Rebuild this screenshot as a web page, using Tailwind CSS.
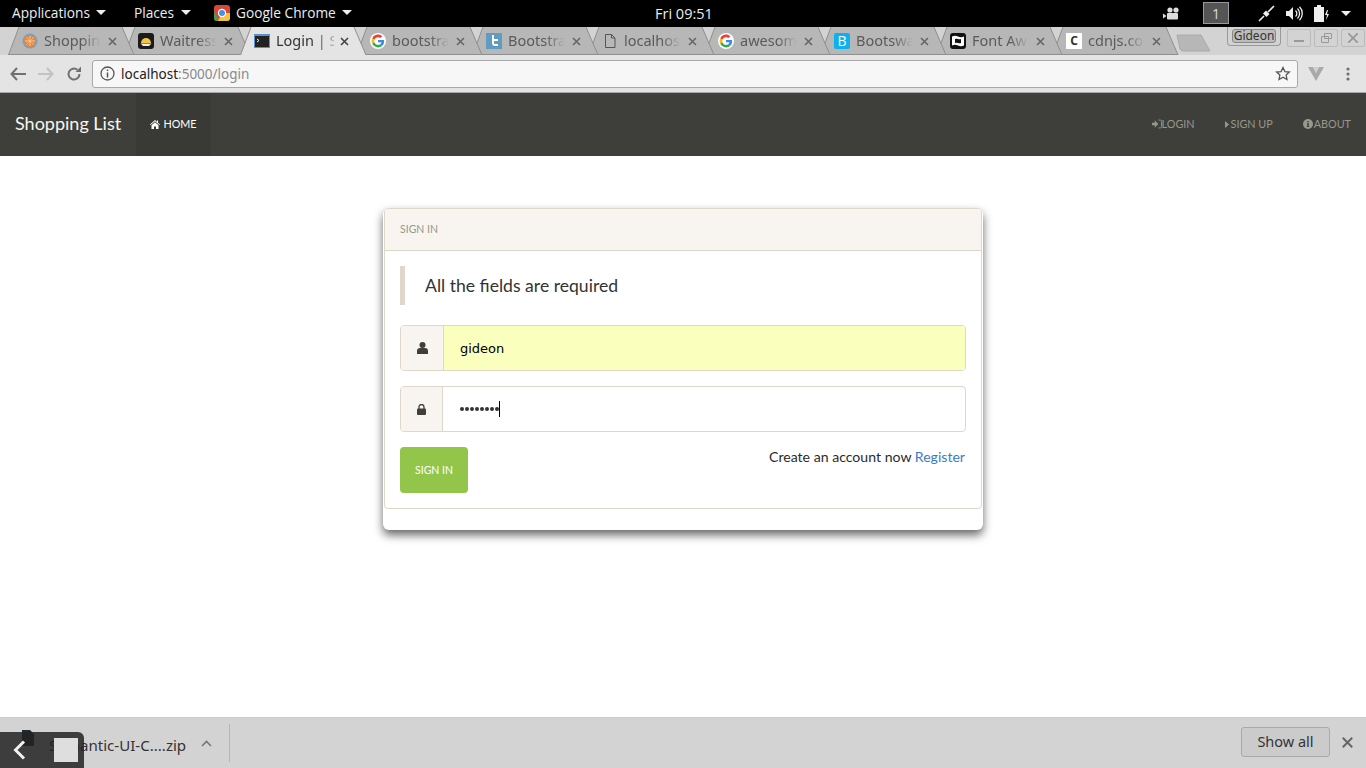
<!DOCTYPE html>
<html lang="en">
<head>
<meta charset="utf-8">
<title>Login | Shopping List</title>
<script src="https://cdn.jsdelivr.net/npm/@tailwindcss/browser@4"></script>
</head>
<body class="bg-white overflow-hidden font-['Lato',sans-serif]">
<div class="relative flex flex-col w-[1366px] h-[768px] overflow-hidden">

  <!-- GNOME top bar -->
  <header class="relative flex items-center h-[27px] shrink-0 pb-[1px] bg-black text-[#eeeeee] text-[13.7px] font-['Open_Sans',sans-serif]">
    <div class="flex items-center gap-[6px] ml-[12px] w-[122px]">
      <span>Applications</span>
      <svg width="10" height="5" viewBox="0 0 10 5"><path d="M0 0h10L5 5z" fill="#eee"/></svg>
    </div>
    <div class="flex items-center gap-[7px] w-[80px]">
      <span>Places</span>
      <svg width="10" height="5" viewBox="0 0 10 5"><path d="M0 0h10L5 5z" fill="#eee"/></svg>
    </div>
    <div class="flex items-center gap-[6px]">
      <svg width="16" height="16" viewBox="0 0 16 16" class="rounded-[3px]">
        <rect width="16" height="16" fill="#d8473a"/><path d="M0 16V6l5 10z" fill="#43a047"/><path d="M16 16H4l4-8h8z" fill="#f5c33b"/><circle cx="8" cy="8" r="4.2" fill="#fff"/><circle cx="8" cy="8" r="3" fill="#4a8fe0"/>
      </svg>
      <span>Google Chrome</span>
      <svg width="10" height="5" viewBox="0 0 10 5"><path d="M0 0h10L5 5z" fill="#eee"/></svg>
    </div>
    <span class="absolute left-[655px] top-[3px] text-[14.5px]">Fri 09:51</span>
    <div class="ml-auto flex items-center">
      <svg width="16" height="13" viewBox="0 0 16 13" class="mr-[24px]"><circle cx="7" cy="3" r="2.6" fill="#ddd"/><circle cx="13" cy="3" r="2.6" fill="#ddd"/><rect x="4" y="6" width="11" height="6.5" rx="1" fill="#ddd"/><path d="M0 6.5l3.5 2.5L0 11.5z" fill="#ddd"/></svg>
      <div class="flex items-center justify-center w-[26px] h-[22px] bg-[#555555] border border-[#9a9a9a] text-[14px] text-[#dddddd] mr-[29px]">1</div>
      <svg width="17" height="17" viewBox="0 0 17 17" class="mr-[11px]"><path d="M1 16l5-5M7 7l3 3M10 7l6-6" stroke="#eee" stroke-width="1.6" fill="none"/><path d="M5 8.5l3-3 3.5 3.5-3 3z" fill="#eee"/></svg>
      <svg width="17" height="15" viewBox="0 0 17 15" class="mr-[11px]"><path d="M0 5h3l4-4v13l-4-4H0z" fill="#eee"/><path d="M9.500 4.500a4 4 0 0 1 0 6M11.500 2.500a7 7 0 0 1 0 10M13.500 .8a9.500 9.500 0 0 1 0 13.400" stroke="#eee" stroke-width="1.300" fill="none"/></svg>
      <svg width="16" height="17" viewBox="0 0 16 17" class="mr-[11px]"><path d="M3 0h4v2h3v15H0V2h3z" fill="#eee"/><path d="M13 5l-2 5h2l-1 5 3-6h-2l1-4z" fill="#eee"/></svg>
      <svg width="10" height="5" viewBox="0 0 10 5" class="mr-[15px]"><path d="M0 0h10L5 5z" fill="#eee"/></svg>
    </div>
  </header>

  <!-- Chrome tab strip -->
  <div class="relative flex h-[28px] shrink-0 bg-[#d3d3d3] pl-[8px]">

    <div class="relative z-[19] w-[116px] h-full shrink-0 flex items-center text-[14.5px] text-[#5a5a5a] font-['Noto_Sans',sans-serif]">
      <svg class="absolute left-0 top-0" width="128" height="28" viewBox="0 0 128 28"><path d="M.5 28 11 0h103l12 28z" fill="#b7b7b7"/><path d="M.5 28 11 0M114 0l12 28M0 27.500h126" stroke="#8f8f8f" fill="none"/></svg>
      <svg class="relative ml-[14px]" width="16" height="16" viewBox="0 0 16 16"><circle cx="8" cy="8" r="7.500" fill="#7b9fc4"/><circle cx="8" cy="8" r="6" fill="#e8873a"/><circle cx="8" cy="8" r="1.600" fill="#f6c9a0"/><path d="M8 3v3M8 10v3M3 8h3M10 8h3M4.500 4.500l2 2M9.500 9.500l2 2M11.500 4.500l-2 2M6.500 9.500l-2 2" stroke="#f6c9a0"/></svg>
      <span class="relative ml-[6px] w-[58px] whitespace-nowrap [mask-image:linear-gradient(to_right,black_65%,transparent_98%)]">Shoppin</span>
      <svg class="relative ml-[6px]" width="9" height="9" viewBox="0 0 9 9"><path d="M1 1l7 7M8 1l-7 7" stroke="#666" stroke-width="1.600"/></svg>
    </div>

    <div class="relative z-[18] w-[116px] h-full shrink-0 flex items-center text-[14.5px] text-[#5a5a5a] font-['Noto_Sans',sans-serif]">
      <svg class="absolute left-0 top-0" width="128" height="28" viewBox="0 0 128 28"><path d="M.5 28 11 0h103l12 28z" fill="#b7b7b7"/><path d="M.5 28 11 0M114 0l12 28M0 27.500h126" stroke="#8f8f8f" fill="none"/></svg>
      <svg class="relative ml-[14px]" width="16" height="16" viewBox="0 0 16 16"><rect width="16" height="16" rx="3" fill="#1b1b1b"/><path d="M3 10a5 5 0 0 1 10 0z" fill="#f4c542"/><path d="M2.500 10.500h11L11 13H5z" fill="#eee"/></svg>
      <span class="relative ml-[6px] w-[58px] whitespace-nowrap [mask-image:linear-gradient(to_right,black_65%,transparent_98%)]">Waitress</span>
      <svg class="relative ml-[6px]" width="9" height="9" viewBox="0 0 9 9"><path d="M1 1l7 7M8 1l-7 7" stroke="#666" stroke-width="1.600"/></svg>
    </div>

    <div class="relative z-[25] w-[116px] h-full shrink-0 flex items-center text-[14.5px] text-[#333333] font-['Noto_Sans',sans-serif]">
      <svg class="absolute left-0 top-0" width="128" height="28" viewBox="0 0 128 28"><path d="M.5 28 11 0h103l12 28z" fill="#e4e4e4"/><path d="M.5 28 11 0M114 0l12 28" stroke="#8f8f8f" fill="none"/></svg>
      <svg class="relative ml-[14px]" width="16" height="16" viewBox="0 0 16 16"><rect width="16" height="14" y="1" fill="#5b8fc9"/><rect x="1" y="3" width="14" height="11" fill="#222"/><path d="M3 6l2 1.500L3 9" stroke="#eee" fill="none"/></svg>
      <span class="relative ml-[6px] w-[58px] whitespace-nowrap [mask-image:linear-gradient(to_right,black_65%,rgba(0,0,0,0.25)_100%)]">Login | S</span>
      <svg class="relative ml-[6px]" width="9" height="9" viewBox="0 0 9 9"><path d="M1 1l7 7M8 1l-7 7" stroke="#444" stroke-width="1.600"/></svg>
    </div>

    <div class="relative z-[16] w-[116px] h-full shrink-0 flex items-center text-[14.5px] text-[#5a5a5a] font-['Noto_Sans',sans-serif]">
      <svg class="absolute left-0 top-0" width="128" height="28" viewBox="0 0 128 28"><path d="M.5 28 11 0h103l12 28z" fill="#b7b7b7"/><path d="M.5 28 11 0M114 0l12 28M0 27.500h126" stroke="#8f8f8f" fill="none"/></svg>
      <svg class="relative ml-[14px]" width="16" height="16" viewBox="-6 -6 60 60"><circle cx="24" cy="24" r="30" fill="#fff"/><path fill="#EA4335" d="M24 9.500c3.540 0 6.710 1.220 9.210 3.600l6.850-6.850C35.900 2.380 30.470 0 24 0 14.620 0 6.510 5.380 2.560 13.220l7.980 6.190C12.430 13.720 17.740 9.500 24 9.500z"/><path fill="#4285F4" d="M46.980 24.550c0-1.570-.15-3.090-.38-4.550H24v9.020h12.940c-.58 2.960-2.260 5.480-4.780 7.180l7.730 6c4.510-4.180 7.090-10.360 7.090-17.650z"/><path fill="#FBBC05" d="M10.530 28.590c-.48-1.450-.76-2.990-.76-4.590s.27-3.140.76-4.590l-7.980-6.190C.92 16.460 0 20.120 0 24c0 3.880.92 7.540 2.560 10.780l7.970-6.190z"/><path fill="#34A853" d="M24 48c6.480 0 11.930-2.130 16.090-5.810l-7.730-6c-2.150 1.450-4.920 2.300-8.360 2.300-6.260 0-11.570-4.220-13.470-9.910l-7.980 6.190C6.510 42.620 14.620 48 24 48z"/></svg>
      <span class="relative ml-[6px] w-[58px] whitespace-nowrap [mask-image:linear-gradient(to_right,black_65%,transparent_98%)]">bootstra</span>
      <svg class="relative ml-[6px]" width="9" height="9" viewBox="0 0 9 9"><path d="M1 1l7 7M8 1l-7 7" stroke="#666" stroke-width="1.600"/></svg>
    </div>

    <div class="relative z-[15] w-[116px] h-full shrink-0 flex items-center text-[14.5px] text-[#5a5a5a] font-['Noto_Sans',sans-serif]">
      <svg class="absolute left-0 top-0" width="128" height="28" viewBox="0 0 128 28"><path d="M.5 28 11 0h103l12 28z" fill="#b7b7b7"/><path d="M.5 28 11 0M114 0l12 28M0 27.500h126" stroke="#8f8f8f" fill="none"/></svg>
      <svg class="relative ml-[14px]" width="16" height="16" viewBox="0 0 16 16"><rect width="16" height="16" fill="#5f9cc0"/><path d="M6 2v8c0 2 1.500 3 3 3h3v-2H9c-.6 0-1-.4-1-1V8h4V6H8V2z" fill="#fff"/></svg>
      <span class="relative ml-[6px] w-[58px] whitespace-nowrap [mask-image:linear-gradient(to_right,black_65%,transparent_98%)]">Bootstra</span>
      <svg class="relative ml-[6px]" width="9" height="9" viewBox="0 0 9 9"><path d="M1 1l7 7M8 1l-7 7" stroke="#666" stroke-width="1.600"/></svg>
    </div>

    <div class="relative z-[14] w-[116px] h-full shrink-0 flex items-center text-[14.5px] text-[#5a5a5a] font-['Noto_Sans',sans-serif]">
      <svg class="absolute left-0 top-0" width="128" height="28" viewBox="0 0 128 28"><path d="M.5 28 11 0h103l12 28z" fill="#b7b7b7"/><path d="M.5 28 11 0M114 0l12 28M0 27.500h126" stroke="#8f8f8f" fill="none"/></svg>
      <svg class="relative ml-[14px]" width="16" height="16" viewBox="0 0 16 16"><path d="M3.500 1.500h6l3.500 3.500v9.500h-9.500zM9.500 1.500V5H13" stroke="#555" fill="none"/></svg>
      <span class="relative ml-[6px] w-[58px] whitespace-nowrap [mask-image:linear-gradient(to_right,black_65%,transparent_98%)]">localhos</span>
      <svg class="relative ml-[6px]" width="9" height="9" viewBox="0 0 9 9"><path d="M1 1l7 7M8 1l-7 7" stroke="#666" stroke-width="1.600"/></svg>
    </div>

    <div class="relative z-[13] w-[116px] h-full shrink-0 flex items-center text-[14.5px] text-[#5a5a5a] font-['Noto_Sans',sans-serif]">
      <svg class="absolute left-0 top-0" width="128" height="28" viewBox="0 0 128 28"><path d="M.5 28 11 0h103l12 28z" fill="#b7b7b7"/><path d="M.5 28 11 0M114 0l12 28M0 27.500h126" stroke="#8f8f8f" fill="none"/></svg>
      <svg class="relative ml-[14px]" width="16" height="16" viewBox="-6 -6 60 60"><circle cx="24" cy="24" r="30" fill="#fff"/><path fill="#EA4335" d="M24 9.500c3.540 0 6.710 1.220 9.210 3.600l6.850-6.850C35.900 2.380 30.470 0 24 0 14.620 0 6.510 5.380 2.560 13.220l7.980 6.190C12.430 13.720 17.740 9.500 24 9.500z"/><path fill="#4285F4" d="M46.980 24.550c0-1.570-.15-3.090-.38-4.550H24v9.020h12.940c-.58 2.960-2.260 5.480-4.780 7.180l7.730 6c4.510-4.180 7.090-10.360 7.090-17.650z"/><path fill="#FBBC05" d="M10.530 28.590c-.48-1.450-.76-2.990-.76-4.590s.27-3.140.76-4.590l-7.980-6.190C.92 16.460 0 20.120 0 24c0 3.880.92 7.540 2.560 10.780l7.970-6.190z"/><path fill="#34A853" d="M24 48c6.480 0 11.930-2.130 16.090-5.810l-7.730-6c-2.150 1.450-4.920 2.300-8.360 2.300-6.260 0-11.570-4.220-13.470-9.910l-7.980 6.190C6.510 42.620 14.620 48 24 48z"/></svg>
      <span class="relative ml-[6px] w-[58px] whitespace-nowrap [mask-image:linear-gradient(to_right,black_65%,transparent_98%)]">awesom</span>
      <svg class="relative ml-[6px]" width="9" height="9" viewBox="0 0 9 9"><path d="M1 1l7 7M8 1l-7 7" stroke="#666" stroke-width="1.600"/></svg>
    </div>

    <div class="relative z-[12] w-[116px] h-full shrink-0 flex items-center text-[14.5px] text-[#5a5a5a] font-['Noto_Sans',sans-serif]">
      <svg class="absolute left-0 top-0" width="128" height="28" viewBox="0 0 128 28"><path d="M.5 28 11 0h103l12 28z" fill="#b7b7b7"/><path d="M.5 28 11 0M114 0l12 28M0 27.500h126" stroke="#8f8f8f" fill="none"/></svg>
      <div class="relative ml-[14px] flex items-center justify-center w-[16px] h-[16px] rounded-[2px] bg-[#0fb0ee] text-white text-[14px] font-['Open_Sans',sans-serif] leading-none">B</div>
      <span class="relative ml-[6px] w-[58px] whitespace-nowrap [mask-image:linear-gradient(to_right,black_65%,transparent_98%)]">Bootswa</span>
      <svg class="relative ml-[6px]" width="9" height="9" viewBox="0 0 9 9"><path d="M1 1l7 7M8 1l-7 7" stroke="#666" stroke-width="1.600"/></svg>
    </div>

    <div class="relative z-[11] w-[116px] h-full shrink-0 flex items-center text-[14.5px] text-[#5a5a5a] font-['Noto_Sans',sans-serif]">
      <svg class="absolute left-0 top-0" width="128" height="28" viewBox="0 0 128 28"><path d="M.5 28 11 0h103l12 28z" fill="#b7b7b7"/><path d="M.5 28 11 0M114 0l12 28M0 27.500h126" stroke="#8f8f8f" fill="none"/></svg>
      <svg class="relative ml-[14px]" width="16" height="16" viewBox="0 0 16 16"><rect width="16" height="16" rx="3" fill="#111"/><path d="M2 3.500q3-1.500 6 0t6 0v9q-3 1.500-6 0t-6 0z" fill="#fff"/><path d="M5 6q1.500-.6 3 0t3 0v4q-1.500.6-3 0t-3 0z" fill="#111"/></svg>
      <span class="relative ml-[6px] w-[58px] whitespace-nowrap [mask-image:linear-gradient(to_right,black_65%,transparent_98%)]">Font Aw</span>
      <svg class="relative ml-[6px]" width="9" height="9" viewBox="0 0 9 9"><path d="M1 1l7 7M8 1l-7 7" stroke="#666" stroke-width="1.600"/></svg>
    </div>

    <div class="relative z-[10] w-[116px] h-full shrink-0 flex items-center text-[14.5px] text-[#5a5a5a] font-['Noto_Sans',sans-serif]">
      <svg class="absolute left-0 top-0" width="128" height="28" viewBox="0 0 128 28"><path d="M.5 28 11 0h103l12 28z" fill="#b7b7b7"/><path d="M.5 28 11 0M114 0l12 28M0 27.500h126" stroke="#8f8f8f" fill="none"/></svg>
      <div class="relative ml-[14px] flex items-center justify-center w-[16px] h-[16px] bg-white text-[#333333] text-[12px] font-bold leading-none">C</div>
      <span class="relative ml-[6px] w-[58px] whitespace-nowrap [mask-image:linear-gradient(to_right,black_65%,transparent_98%)]">cdnjs.co</span>
      <svg class="relative ml-[6px]" width="9" height="9" viewBox="0 0 9 9"><path d="M1 1l7 7M8 1l-7 7" stroke="#666" stroke-width="1.600"/></svg>
    </div>

    <svg class="relative z-[5] ml-[8px] mt-[7px]" width="36" height="18" viewBox="0 0 36 18"><path d="M1 1h24l9 16H7q-2 0-3-2z" fill="#b7b7b7" stroke="#aaa"/></svg>

    <div class="ml-auto flex items-start gap-[3px] pr-[1px]">
      <div class="flex items-center justify-center w-[54px] h-[19px] rounded-b-[4px] border border-t-0 border-[#999999] text-[12px] text-[#333333] font-['Noto_Sans',sans-serif] leading-none mr-[3px]"><span class="px-[1px] rounded-[3px] bg-[#bcbcbc] border border-[#888888]">Gideon</span></div>
      <div class="flex items-center justify-center w-[24px] h-[18px] mt-[2px] border border-[#bbbbbb] rounded-[2px]"><svg width="10" height="10" viewBox="0 0 10 10"><path d="M0 8h10" stroke="#999" stroke-width="2"/></svg></div>
      <div class="flex items-center justify-center w-[24px] h-[18px] mt-[2px] border border-[#bbbbbb] rounded-[2px]"><svg width="11" height="10" viewBox="0 0 11 10"><path d="M3.500 .5h7v5h-7zM.5 3.500h7v6h-7z" stroke="#999" fill="#d3d3d3"/></svg></div>
      <div class="flex items-center justify-center w-[24px] h-[18px] mt-[2px] border border-[#bbbbbb] rounded-[2px]"><svg width="10" height="10" viewBox="0 0 10 10"><path d="M0 0l10 10M10 0L0 10" stroke="#999" stroke-width="1.800"/></svg></div>
    </div>
  </div>

  <!-- Chrome toolbar -->
  <div class="flex items-center h-[38px] shrink-0 bg-[#e4e4e4] border-b border-[#a8a8a8]">
    <svg class="ml-[10px]" width="16" height="14" viewBox="0 0 16 14"><path d="M7 1 1.500 7 7 13M2 7h14" stroke="#707070" stroke-width="2" fill="none"/></svg>
    <svg class="ml-[12px]" width="16" height="14" viewBox="0 0 16 14"><path d="M9 1l5.500 6L9 13M14 7H0" stroke="#c2c2c2" stroke-width="2" fill="none"/></svg>
    <svg class="ml-[12px]" width="16" height="16" viewBox="0 0 16 16"><path d="M13.500 8A5.500 5.500 0 1 1 11.500 3.800" stroke="#707070" stroke-width="2" fill="none"/><path d="M9.500 6H15V.5z" fill="#707070"/></svg>
    <div class="flex items-center ml-[10px] w-[1206px] h-[28px] bg-[#f7f7f7] border border-[#a9a9a9] rounded-[3px] font-['Noto_Sans',sans-serif] text-[13.5px]">
      <svg class="ml-[7px]" width="15" height="15" viewBox="0 0 15 15"><circle cx="7.500" cy="7.500" r="6.500" stroke="#555" stroke-width="1.300" fill="none"/><path d="M7.500 6.500v5M7.500 3.500v1.600" stroke="#555" stroke-width="1.500"/></svg>
      <span class="ml-[6px] pt-[1px] text-[#222222]">localhost<span class="text-[#8a8a8a]">:5000/login</span></span>
      <svg class="ml-auto mr-[6px]" width="16" height="15" viewBox="0 0 16 15"><path d="M8 1.500l1.900 4.100 4.500.5-3.300 3 .9 4.400L8 11.300l-4 2.200.9-4.400-3.300-3 4.500-.5z" stroke="#555" stroke-width="1.300" fill="none"/></svg>
    </div>
    <svg class="ml-[10px]" width="16" height="15" viewBox="0 0 16 15"><path d="M0 1h5l3 6 3-6h5L8 15z" fill="#a9a9a9"/><path d="M5 1l3 6 3-6z" fill="#cfcfcf"/></svg>
    <svg class="ml-[22px]" width="4" height="14" viewBox="0 0 4 14"><circle cx="2" cy="2" r="1.600" fill="#707070"/><circle cx="2" cy="7" r="1.600" fill="#707070"/><circle cx="2" cy="12" r="1.600" fill="#707070"/></svg>
  </div>

  <!-- App navbar -->
  <nav class="flex items-stretch h-[63px] shrink-0 bg-[#3e3f3a] text-[10.8px]">
    <a class="flex items-center pl-[15px] pb-[2px] w-[136px] text-[18px] text-[#f8f5f0]">Shopping List</a>
    <a class="flex items-center justify-center gap-[3px] pb-[1px] w-[75px] bg-[#393a35] text-white">
      <svg width="10" height="9" viewBox="0 0 10 9"><path d="M5 0 0 4.500l.6.6L5 1.300l4.400 3.800.6-.6L8 2.700V.5H7v1.300z" fill="#fff"/><path d="M5 2.300 1.500 5.300V9h2.500V6.500h2V9h2.500V5.300z" fill="#fff"/></svg>
      <span>HOME</span>
    </a>
    <div class="ml-auto flex items-center pb-[1px] text-[#98978b]">
      <a class="flex items-center"><svg width="10" height="10" viewBox="0 0 11 10"><path d="M0 3.500h3V1l4 4-4 4V6.500H0z" fill="#98978b"/><path d="M7 .7h2.200q1.300 0 1.300 1.300v6q0 1.300-1.300 1.300H7" stroke="#98978b" fill="none"/></svg><span>LOGIN</span></a>
      <a class="flex items-center ml-[30px]"><svg width="4" height="7" viewBox="0 0 4 7" class="mr-[2px]"><path d="M0 0l4 3.500L0 7z" fill="#98978b"/></svg><span>SIGN UP</span></a>
      <a class="flex items-center ml-[30px] mr-[15px]"><svg width="10" height="10" viewBox="0 0 10 10" class="mr-[1px]"><circle cx="5" cy="5" r="5" fill="#98978b"/><path d="M4 4h1.700v3.300h.6V8H3.800v-.7h.5V4.700H4zM4.300 2h1.400v1.200H4.300z" fill="#3e3f3a"/></svg><span>ABOUT</span></a>
    </div>
  </nav>

  <!-- Page content -->
  <main class="flex-1 bg-white">
    <div class="mx-auto mt-[52px] w-[600px] h-[322px] px-px bg-white rounded-[6px] shadow-[0_5px_10px_rgba(0,0,0,0.6)]">
      <div class="h-[301px] bg-white border border-[#dfd7ca] rounded-[4px]">
        <div class="flex items-center h-[42px] px-[15px] bg-[#f8f5f0] border-b border-[#dfd7ca] rounded-t-[3px] text-[10.5px] text-[#98978b]">SIGN IN</div>
        <div class="px-[15px] pt-[15px]">
          <div class="flex items-center h-[39px] pl-[20px] pt-[1px] border-l-[5px] border-[#dfd7ca] text-[17.6px] text-[#333333]">All the fields are required</div>
          <div class="flex h-[46px] mt-[20px] border border-[#dfd7ca] rounded-[4px] overflow-hidden">
            <div class="flex items-center justify-center w-[43px] shrink-0 bg-[#f8f5f0] border-r border-[#dfd7ca]">
              <svg width="11" height="12" viewBox="0 0 11 12"><circle cx="5.500" cy="3" r="3" fill="#3e3f3a"/><path d="M0 12V9q0-3 3-3h5q3 0 3 3v3z" fill="#3e3f3a"/></svg>
            </div>
            <div class="flex-1 flex items-center pl-[16px] pt-[1px] bg-[#faffbd] font-['DejaVu_Sans',sans-serif] text-[13px] text-black">gideon</div>
          </div>
          <div class="flex h-[46px] mt-[15px] border border-[#dfd7ca] rounded-[4px] overflow-hidden">
            <div class="flex items-center justify-center w-[42px] shrink-0 bg-[#f8f5f0] border-r border-[#dfd7ca]">
              <svg width="9" height="11" viewBox="0 0 9 11"><rect y="4.500" width="9" height="6.500" rx="1" fill="#3e3f3a"/><path d="M2 5V3a2.500 2.500 0 0 1 5 0v2" stroke="#3e3f3a" stroke-width="1.300" fill="none"/></svg>
            </div>
            <div class="flex-1 flex items-center pl-[17px] text-black">
              <div class="flex gap-[1px]">
                <span class="w-[4px] h-[4px] rounded-full bg-[#333333]"></span><span class="w-[4px] h-[4px] rounded-full bg-[#333333]"></span><span class="w-[4px] h-[4px] rounded-full bg-[#333333]"></span><span class="w-[4px] h-[4px] rounded-full bg-[#333333]"></span><span class="w-[4px] h-[4px] rounded-full bg-[#333333]"></span><span class="w-[4px] h-[4px] rounded-full bg-[#333333]"></span><span class="w-[4px] h-[4px] rounded-full bg-[#333333]"></span><span class="w-[4px] h-[4px] rounded-full bg-[#333333]"></span>
              </div>
              <span class="w-px h-[16px] bg-black"></span>
            </div>
          </div>
          <div class="flex items-start justify-between mt-[15px]">
            <a class="flex items-center justify-center w-[68px] h-[46px] pt-[1px] rounded-[4px] bg-[#93c54b] text-white text-[10.5px]">SIGN IN</a>
            <p class="mr-px text-[14.1px] leading-[20px] text-[#2b2b2b]">Create an account now <a class="text-[#3a7cc4]">Register</a></p>
          </div>
        </div>
      </div>
    </div>
  </main>

  <!-- Download shelf -->
  <footer class="flex items-center h-[51px] shrink-0 bg-[#d3d3d3] border-t border-[#cccccc] font-['Noto_Sans',sans-serif]">
    <svg class="ml-[22px] mb-[10px]" width="12" height="16" viewBox="0 0 12 16"><path d="M0 0h8l4 4v12H0z" fill="#1c2a33"/></svg>
    <span class="ml-[15px] pt-[5px] text-[15.1px] text-[#333333]">Semantic-UI-C....zip</span>
    <svg class="ml-[15px]" width="11" height="7" viewBox="0 0 11 7"><path d="M1 6l4.500-4.500L10 6" stroke="#777" stroke-width="1.600" fill="none"/></svg>
    <div class="ml-[17px] w-px h-[38px] bg-[#b5b5b5]"></div>
    <div class="ml-auto mb-[2px] flex items-center justify-center w-[89px] h-[30px] rounded-[3px] border border-[#a9a9a9] bg-[#cbcbcb] text-[14.5px] text-[#333333]">Show all</div>
    <svg class="ml-[12px] mr-[13px] mb-[2px]" width="11" height="11" viewBox="0 0 10 10"><path d="M.7.7l8.600 8.600M9.300.7.700 9.300" stroke="#666" stroke-width="1.800"/></svg>
  </footer>

  <!-- Overlay launcher over the shelf -->
  <div class="absolute left-0 bottom-0 flex items-center w-[84px] h-[36px] bg-[#222222]/85 rounded-tr-[6px]">
    <svg class="ml-[13px]" width="13" height="20" viewBox="0 0 13 20"><path d="M11 1.500 2.500 10 11 18.500" stroke="#f2f2f2" stroke-width="3" fill="none"/></svg>
    <div class="ml-[28px] w-[24px] h-[24px] bg-[#dedede]"></div>
  </div>

</div>
</body>
</html>
